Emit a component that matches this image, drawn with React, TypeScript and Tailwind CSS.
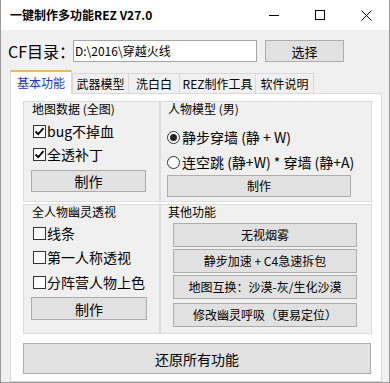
import type { ReactNode } from 'react'

const FONT = "font-['Noto_Sans_CJK_SC','Noto_Sans',sans-serif]"

function Check({ checked, label }: { checked?: boolean; label: string }) {
  return (
    <div className="flex items-center h-[16px] pl-[9px] gap-[1px]">
      <span className="w-[13px] h-[13px] border border-[#333333] bg-white flex items-center justify-center">
        {checked && (
          <svg width="11" height="11" viewBox="0 0 11 11">
            <path d="M1.5 5.5 L4.2 8.2 L9.5 2.2" fill="none" stroke="#000" strokeWidth="1.8" />
          </svg>
        )}
      </span>
      <span className="text-[14px] leading-none">{label}</span>
    </div>
  )
}

function Radio({ checked, label }: { checked?: boolean; label: string }) {
  return (
    <div className="flex items-center h-[16px] pl-[6px] gap-[2px]">
      <span className="w-[13px] h-[13px] rounded-full border border-[#333333] bg-white flex items-center justify-center">
        {checked && <span className="w-[7px] h-[7px] rounded-full bg-[#222222]" />}
      </span>
      <span className="text-[14px] leading-none whitespace-pre">{label}</span>
    </div>
  )
}

function Btn({ children, className }: { children: ReactNode; className: string }) {
  return (
    <div
      className={`bg-[#e1e1e1] border border-[#adadad] flex items-center justify-center leading-none shrink-0 ${className}`}
    >
      {children}
    </div>
  )
}

function Group({ title, className, children }: { title: string; className: string; children: ReactNode }) {
  return (
    <div className={`bg-[#f0f0f0] border border-[#dcdcdc] flex flex-col ${className}`}>
      <div className="text-[12px] leading-[14px] whitespace-pre">{title}</div>
      {children}
    </div>
  )
}

export default function App() {
  return (
    <div
      className={`w-[390px] h-[383px] bg-[#f0f0f0] border-x border-b border-[#9a9a9a] flex flex-col text-black ${FONT}`}
    >
      {/* title bar */}
      <div className="h-[30px] bg-white flex items-center pl-[9px]">
        <span className="text-[12px] font-bold leading-none">一键制作多功能REZ V27.0</span>
        <div className="ml-auto flex items-center h-full">
          <div className="w-[46px] h-full flex items-center justify-center">
            <span className="w-[10px] h-px bg-black" />
          </div>
          <div className="w-[46px] h-full flex items-center justify-center">
            <span className="w-[10px] h-[10px] border border-black" />
          </div>
          <div className="w-[46px] h-full flex items-center justify-center">
            <svg width="11" height="11" viewBox="0 0 11 11">
              <path d="M0.5 0.5 L10.5 10.5 M10.5 0.5 L0.5 10.5" stroke="#000" strokeWidth="1" />
            </svg>
          </div>
        </div>
      </div>

      {/* directory row */}
      <div className="flex items-center h-[22px] mt-[10px] pl-[7px]">
        <span className="text-[16px] leading-none w-[65px] shrink-0 whitespace-nowrap">CF目录：</span>
        <div className="w-[184px] shrink-0 h-[22px] border border-[#a5a5a5] bg-white text-[12px] leading-none pl-[1px] flex items-center">
          D:\2016\穿越火线
        </div>
        <Btn className="ml-[8px] w-[79px] h-[22px] text-[13px]">选择</Btn>
      </div>

      {/* tabs */}
      <div className="flex items-end h-[23px] mt-[8px] pl-[9px] text-[12px] leading-none">
        <div className="relative z-10 -mb-px w-[62px] h-[24px] bg-white border-x border-[#d9d9d9] border-t-2 border-t-[#f2b84b] flex items-center justify-center text-[#1c33c8]">
          基本功能
        </div>
        <div className="w-[57px] h-[20px] bg-[#f0f0f0] border border-b-0 border-[#d9d9d9] flex items-center justify-center">
          武器模型
        </div>
        <div className="w-[51px] h-[20px] bg-[#f0f0f0] border border-b-0 border-l-0 border-[#d9d9d9] flex items-center justify-center">
          洗白白
        </div>
        <div className="w-[76px] h-[20px] bg-[#f0f0f0] border border-b-0 border-l-0 border-[#d9d9d9] flex items-center justify-center">
          REZ制作工具
        </div>
        <div className="w-[58px] h-[20px] bg-[#f0f0f0] border border-b-0 border-l-0 border-[#d9d9d9] flex items-center justify-center">
          软件说明
        </div>
      </div>

      {/* tab panel */}
      <div className="ml-[9px] w-[372px] h-[289px] bg-white border border-[#d9d9d9] pl-[12px] pt-[7px] flex flex-col">
        <div className="flex">
          <Group title="地图数据 (全图)" className="w-[137px] h-[101px] pl-[8px]">
            <div className="-ml-[8px] flex flex-col">
              <div className="mt-[7px]">
                <Check checked label="bug不掉血" />
              </div>
              <div className="mt-[7px]">
                <Check checked label="全透补丁" />
              </div>
              <Btn className="mt-[8px] ml-[7px] w-[115px] h-[22px] text-[14px]">制作</Btn>
            </div>
          </Group>
          <Group title="人物模型 (男)" className="w-[212px] h-[101px] pl-[7px]">
            <div className="-ml-[7px] flex flex-col">
              <div className="mt-[13px]">
                <Radio checked label="静步穿墙 (静 + W)" />
              </div>
              <div className="mt-[9px]">
                <Radio label="连空跳 (静+W) * 穿墙 (静+A)" />
              </div>
              <Btn className="mt-[5px] ml-[6px] w-[184px] h-[22px] text-[12px]">制作</Btn>
            </div>
          </Group>
        </div>

        <div className="flex mt-[2px]">
          <Group title="全人物幽灵透视" className="w-[137px] h-[130px] pl-[8px]">
            <div className="-ml-[8px] flex flex-col">
              <div className="mt-[6px]">
                <Check label="线条" />
              </div>
              <div className="mt-[8px]">
                <Check label="第一人称透视" />
              </div>
              <div className="mt-[9px]">
                <Check label="分阵营人物上色" />
              </div>
              <Btn className="mt-[7px] ml-[7px] w-[116px] h-[23px] text-[14px]">制作</Btn>
            </div>
          </Group>
          <Group title="其他功能" className="w-[212px] h-[130px] pl-[7px]">
            <div className="-ml-[7px] flex flex-col text-[12px]">
              <Btn className="mt-[4px] ml-[12px] w-[184px] h-[24px]">无视烟雾</Btn>
              <Btn className="mt-[2px] ml-[12px] w-[184px] h-[24px] whitespace-pre">静步加速 + C4急速拆包</Btn>
              <Btn className="mt-[2px] ml-[12px] w-[184px] h-[24px]">地图互换：沙漠-灰/生化沙漠</Btn>
              <Btn className="mt-[4px] ml-[12px] w-[184px] h-[24px]">修改幽灵呼吸（更易定位）</Btn>
            </div>
          </Group>
        </div>

        <Btn className="mt-[9px] w-[348px] h-[31px] text-[14px]">还原所有功能</Btn>
      </div>
    </div>
  )
}
